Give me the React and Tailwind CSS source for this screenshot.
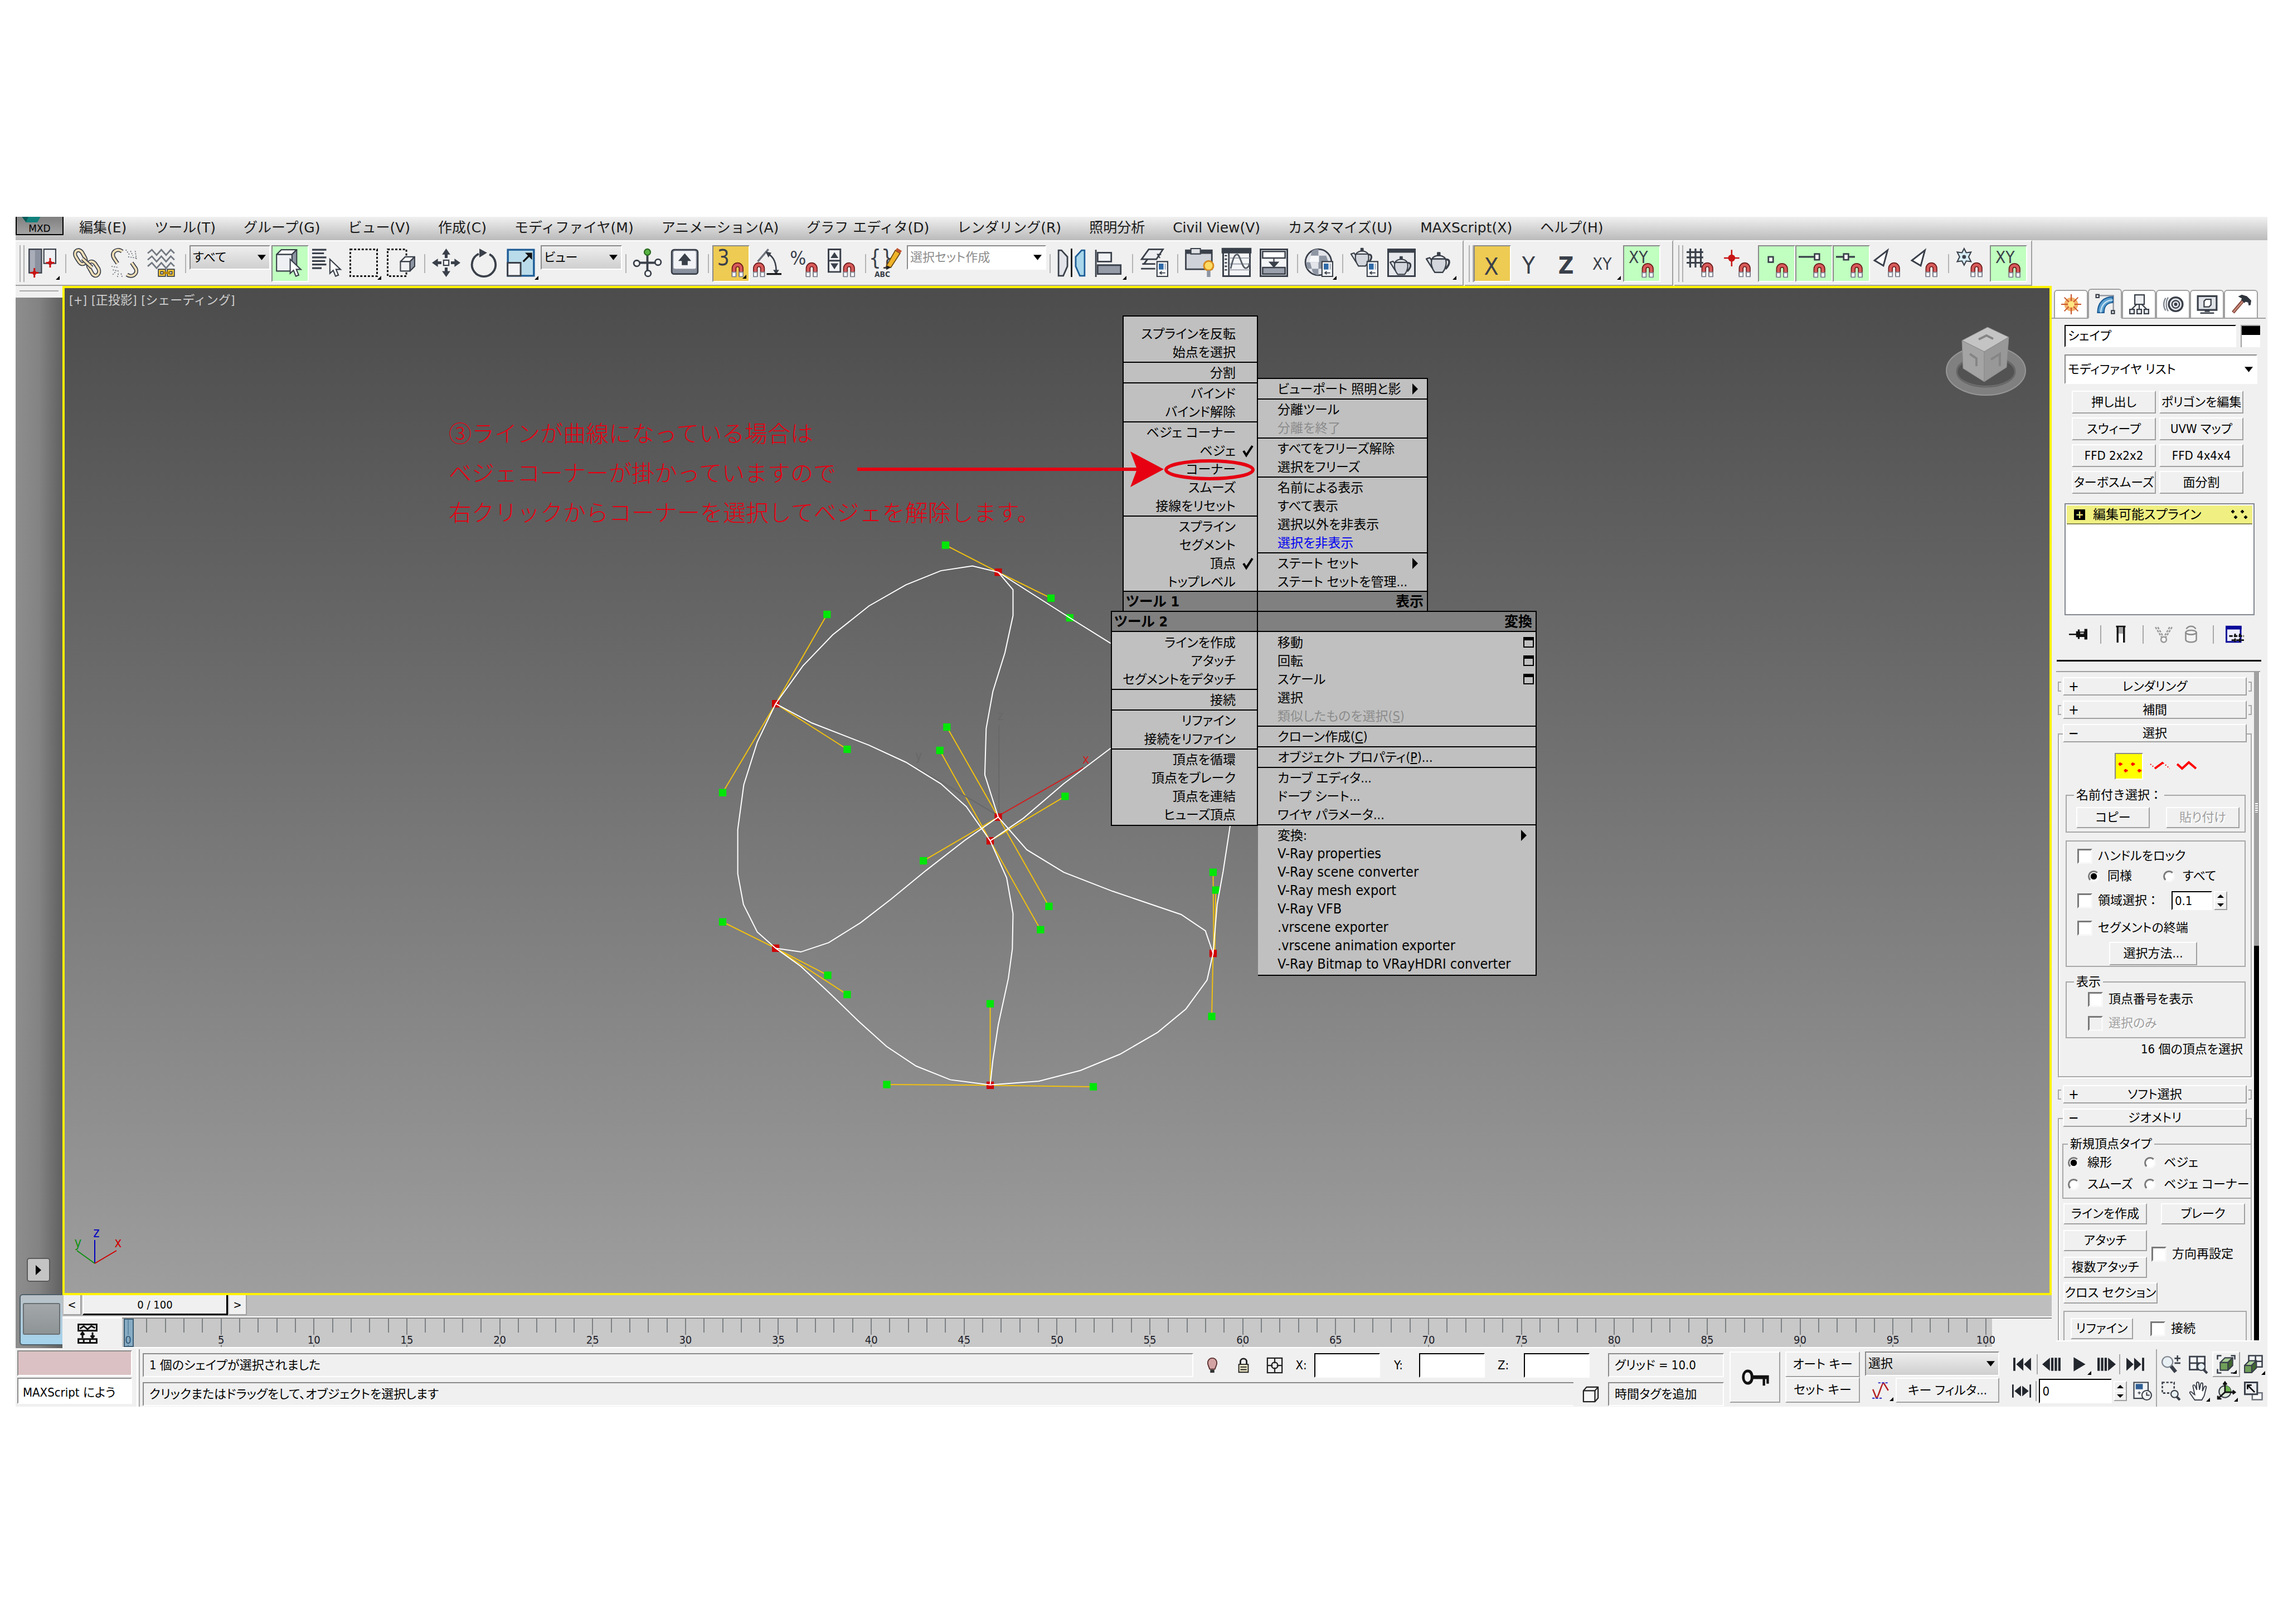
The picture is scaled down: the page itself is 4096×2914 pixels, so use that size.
import { useState } from 'react'

const INK = '#3a404a'

/* ---------- shared icon parts ---------- */

function Magnet({ x, y }) {
  return (
    <g transform={`translate(${x} ${y})`}>
      <path d="M2 12V5.2a3 3 0 0 1 6 0V12" fill="none" stroke="#6b1a1a" strokeWidth="4" />
      <path d="M2 12V5.2a3 3 0 0 1 6 0V12" fill="none" stroke="#d85a5a" strokeWidth="2.4" />
      <path d="M.4 8.4h3.2v3.8H.4zM6.4 8.4h3.2v3.8H6.4z" fill="#fff" stroke="#7c8594" strokeWidth=".8" />
    </g>
  )
}

function Rope({ d, color = '#f3dfb8', width = 3.4 }) {
  return (
    <>
      <path d={d} fill="none" stroke={INK} strokeWidth={width} />
      <path d={d} fill="none" stroke={color} strokeWidth={width - 1.6} />
    </>
  )
}

function Cursor({ x, y }) {
  return (
    <path
      transform={`translate(${x} ${y})`}
      d="M0 0v12l2.8-2.6 2 5 2.4-1-2-4.8h3.8z"
      fill="#fff"
      stroke={INK}
      strokeWidth="1"
    />
  )
}

function Cube({ x, y, w = 12, h = 12, front = '#eef0f3', side = '#8d95a3', top = '#fff' }) {
  return (
    <g transform={`translate(${x} ${y})`} stroke={INK} strokeWidth="1" strokeLinejoin="round">
      <path d={`M0 4L4 0h${w - 4}l-4 4z`} fill={top} />
      <path d={`M${w - 4} 4l4-4v${h - 4}l-4 4z`} fill={side} />
      <path d={`M0 4h${w - 4}v${h - 4}H0z`} fill={front} />
    </g>
  )
}

function Teapot({ x = 0, y = 0, s = 1 }) {
  return (
    <g transform={`translate(${x} ${y}) scale(${s})`} stroke={INK} strokeWidth="1.2" strokeLinejoin="round">
      <path d="M17 7c5-2 6 3 1 8" fill="none" strokeWidth="1.8" />
      <path d="M6 14L1 6l3-1 3 4z" fill="#dfe2e7" />
      <path d="M6 6h12c1.5 4 0 9-2.500 12h-7C6 15 4.500 10 6 6z" fill="#d3d6dc" />
      <path d="M6 6c1-2 4-3 6-3s5 1 6 3z" fill="#eceef1" />
      <path d="M11 .5h2V3h-2z" fill={INK} />
    </g>
  )
}

function Sheet({ x, y }) {
  return (
    <g transform={`translate(${x} ${y})`}>
      <path d="M.5.5h9v12.500h-9z" fill="#f7f8fa" stroke={INK} />
      <path d="M2 2.200h4v5H2z" fill="#2f6aa8" />
      <path d="M7 2.200h1v5H7z" fill="#aab0ba" />
      <path d="M2.500 10h5M4.500 8.700L3 10l1.500 1.300" fill="none" stroke={INK} strokeWidth=".8" />
    </g>
  )
}

function Label({ x, y, size, bold, children }) {
  return (
    <text x={x} y={y} fontSize={size} fontWeight={bold ? 700 : 400} fill={INK} textAnchor="middle">
      {children}
    </text>
  )
}

/* Main toolbar drawings on a 24 unit grid */
const drawings = {
  array: (
    <>
      <path d="M1 .5h10.500v20H1z" fill="#8b919e" stroke={INK} />
      <path d="M2 1.500h4v18H2z" fill="#a9aeb9" />
      <path d="M13.500.5H23.500v12H13.500z" fill="#eef0f3" stroke={INK} />
      <path d="M5.500 16.500v8M2 20.500h7M18.800 8v8M15.300 12h7" stroke="#c81414" strokeWidth="1.400" />
      <circle cx="5.500" cy="20.500" r="1.700" fill="#c81414" />
      <circle cx="18.800" cy="12" r="1.700" fill="#c81414" />
    </>
  ),
  link: (
    <>
      <Rope d="M3 8C-.5 3 4-1 7.500 3l2.800 5c2 4-2.500 7-5 3.500z" />
      <Rope d="M14 17c-3.500-4 1-8.500 4.500-4.500l3 4.500c2 4.500-2.500 8-5 4.500z" />
      <Rope d="M8 8.500l8 7.500" />
    </>
  ),
  unlink: (
    <>
      <Rope d="M10 2.500C6-1 0 3 3 8l3 4.500" />
      <Rope d="M14 22c4 3 9.500-.5 7.500-5L18 12" />
      <path d="M13 1l3 4M17 2l2 4M21 2l1 7M15 7l7 1M1 15l6 1M2 18l5 1M2 22l3-3M6 24l1-4M9 21l1 3" stroke="#6d727b" strokeWidth=".8" strokeDasharray="1 1" />
    </>
  ),
  bind: (
    <>
      {[1, 6.500, 12].map((y) => (
        <path key={y} d={`M0 ${y + 3}l3.500-3 4 4.500 4-4.500 4 4.500 4-4.500 3 3`} fill="none" stroke="#737982" strokeWidth="1.300" />
      ))}
      <Rope d="M10 18.500h4v4h-4zM17.500 18.500h4v4h-4z" color="#f5c532" width={2.800} />
      <path d="M13 20.500h6" stroke="#b8860b" strokeWidth="2" />
    </>
  ),
  select: (
    <>
      <Cube x={1.500} y={1} w={17} h={18} />
      <Cursor x={13} y={9} />
    </>
  ),
  list: (
    <>
      <path d="M0 1h12M0 4h10M0 7.500h12M0 10.500h11M0 13.500h12M0 16.500h8" stroke={INK} strokeWidth="1.500" />
      <Cursor x={15} y={9} />
    </>
  ),
  region: <path d="M.7.7h22.600v22.600H.7z" fill="none" stroke="#111" strokeWidth="1.400" strokeDasharray="1.800 1.400" />,
  window: (
    <>
      <path d="M.7.7h15.800v22.600H.7z" fill="none" stroke="#111" strokeWidth="1.400" strokeDasharray="1.800 1.400" />
      <Cube x={11.500} y={7} w={12} h={12} />
    </>
  ),
  move: (
    <g fill={INK}>
      <path d="M12 0l3.500 5h-2.300v3h-2.400V5H8.500zM12 24l3.500-5h-2.300v-3h-2.400v3H8.500zM0 12l5-3.500v2.300h3v2.400H5v2.300zM24 12l-5-3.500v2.300h-3v2.400h3v2.300z" />
      <path d="M9.800 9.800h4.400v4.400H9.800z" fill="#fff" stroke={INK} />
    </g>
  ),
  rotate: (
    <>
      <path d="M8 4.500A10 10 0 1 0 17 4.800" fill="none" stroke={INK} strokeWidth="1.800" />
      <path d="M8.500 0l6.500 3.500-6.500 4z" fill={INK} />
    </>
  ),
  scale: (
    <>
      <path d="M1 1h22v22H1z" fill="#b9dbea" stroke="#1d5c96" strokeWidth="1.600" />
      <path d="M.8 12h11v11H.8z" fill="#f2f3f5" stroke={INK} strokeWidth="1.400" />
      <path d="M14 11l5-5" stroke="#111" strokeWidth="1.500" />
      <path d="M15.500 3.500H21.500v6z" fill="#111" />
    </>
  ),
  pivot: (
    <>
      <path d="M12 4v16M4 12h16" stroke={INK} strokeWidth="1.800" />
      <circle cx="12" cy="3" r="2.600" fill="#59b344" stroke="#2c6b20" />
      <circle cx="3" cy="12.500" r="2.500" fill="#fff" stroke={INK} strokeWidth="1.300" />
      <circle cx="21" cy="11.500" r="2.500" fill="#fff" stroke={INK} strokeWidth="1.300" />
      <circle cx="12.500" cy="21" r="2.500" fill="#fff" stroke={INK} strokeWidth="1.300" />
    </>
  ),
  keyboard: (
    <>
      <rect x="1" y="1" width="22" height="20.500" rx="2" fill="#8a919e" stroke={INK} strokeWidth="1.300" />
      <rect x="2.500" y="2" width="19" height="15" rx="1.500" fill="#f2f3f6" />
      <path d="M12 4l5.500 6.500H14.500V14h-5v-3.500H6.500z" fill={INK} />
    </>
  ),
  snap3: (
    <>
      <Label x={6.500} y={14} size={18}>3</Label>
      <Magnet x={13.500} y={11.500} />
    </>
  ),
  angleSnap: (
    <>
      <path d="M4 11L13 .5" stroke="#6d727b" strokeWidth="1.600" />
      <path d="M12 4c6 3 8 9 7.500 17" fill="none" stroke={INK} strokeWidth="1.200" />
      <path d="M10.500 2.500l5 1-2.500 4zM17 18h5l-2.500 4z" fill={INK} />
      <path d="M11.500 21.500H24" stroke="#111" strokeWidth="1.500" />
      <Magnet x={0} y={11.500} />
    </>
  ),
  percentSnap: (
    <>
      <Label x={6.500} y={13.500} size={16}>%</Label>
      <Magnet x={13} y={11.500} />
    </>
  ),
  spinnerSnap: (
    <>
      <path d="M.7.7h10v19h-10zM.7 10.200h10" fill="#f2f3f5" stroke={INK} strokeWidth="1.400" />
      <path d="M5.700 3l3.300 5H2.400zM5.700 17.500l3.300-5H2.400z" fill={INK} />
      <Magnet x={13} y={11.500} />
    </>
  ),
  namedSets: (
    <>
      <Label x={7} y={14} size={18}>{'{}'}</Label>
      <path d="M11.500 14.500L19 1.500l4 2.500-7.800 12z" fill="#f0b429" stroke="#6b4a12" strokeWidth=".8" />
      <path d="M19 1.500L20.500-.5l4 2.500L23 4z" fill="#c0542e" />
      <path d="M11.500 14.500l3.700 1.500-4 2z" fill="#222" />
      <Label x={8} y={24} size={6.500} bold>ABC</Label>
    </>
  ),
  mirror: (
    <>
      <path d="M1 1.500h2.500L8.500 7v8L5 23H1z" fill="#e2e4e9" stroke={INK} strokeWidth="1.300" />
      <path d="M23 1.500h-2.500L15.500 7v8L19 23h4z" fill="#a9d6ea" stroke="#1d5c96" strokeWidth="1.300" />
      <path d="M12 0v24" stroke="#111" strokeWidth="1.300" />
    </>
  ),
  align: (
    <>
      <path d="M1 1v23" stroke={INK} strokeWidth="1.300" />
      <path d="M2.500 3.500H14v7.500H2.500z" fill="#f2f3f5" stroke={INK} strokeWidth="1.300" />
      <path d="M2.500 14H22v7.500H2.500z" fill="#959ba7" stroke={INK} strokeWidth="1.300" />
    </>
  ),
  layers: (
    <>
      <path d="M1 17h12M2 13h11M3.500 13l3-4" stroke={INK} strokeWidth="1.400" fill="none" />
      <path d="M1.500 9L7.500.7h12L14 9z" fill="#eceef1" stroke={INK} strokeWidth="1.300" />
      <path d="M18 5h-3l2 3" fill="none" stroke={INK} />
      <Sheet x={14} y={10.500} />
    </>
  ),
  ribbon: (
    <>
      <path d="M.7 1.500h22v16H.7z" fill="#cfd2d8" stroke={INK} strokeWidth="1.300" />
      <path d="M.7 1h22v3.500H.7z" fill={INK} />
      <path d="M5 0h8v4.500H5z" fill="#dfe1e5" stroke={INK} />
      <circle cx="20" cy="14.500" r="4" fill="#fddb63" stroke="#d98c1e" strokeWidth="1.400" />
      <path d="M18.500 18.500h3V24h-3z" fill="#8d95a3" />
    </>
  ),
  curves: (
    <>
      <path d="M.7.7h22.600v22.600H.7z" fill="#f4f5f7" stroke={INK} strokeWidth="1.400" />
      <path d="M0 0h24v3.500H0zM5.500 3v20" fill={INK} stroke={INK} strokeWidth="1.200" />
      <path d="M2 6h2M2 9h2M2 12h2M2 15h2M2 18h2" stroke={INK} strokeWidth="1.200" />
      <path d="M6 8h17M6 13h17M6 18h17" stroke="#a6abb5" />
      <path d="M7 17c2-8 3-12 5.500-12s4 11 7 11.500c2 .3 3-2 3.500-4" fill="none" stroke="#565c66" strokeWidth="1.300" />
    </>
  ),
  schematic: (
    <>
      <path d="M.7.7h22.600v22.600H.7z" fill="#f4f5f7" stroke={INK} strokeWidth="1.400" />
      <path d="M2.500 2.500h19v5.500h-19z" fill="#fff" stroke={INK} strokeWidth="1.200" />
      <path d="M2.500 16h19v5.500h-19z" fill="#9ba1ad" stroke={INK} strokeWidth="1.200" />
      <path d="M12 8v5M8.500 11.500h7L12 15.500z" fill={INK} stroke={INK} />
    </>
  ),
  material: (
    <>
      <circle cx="11.500" cy="11.500" r="11" fill="#e3e5ea" stroke={INK} strokeWidth="1.300" />
      <path d="M6 2c2-1.500 4-1.700 5.500-1.500V6H5zM12 6h6l2 5.500h-8zM5 6l7 0v5.500H3.500zM1 11.500h3.500L6 17H2zM11.500 11.500h7L17 17h-5.500zM6 17h5.500v5.500C8 22 6 20 6 17z" fill="#8f96a3" />
      <path d="M5 6h7v5.500H3.500z" fill="#f6f7f9" />
      <Sheet x={14} y={10.500} />
    </>
  ),
  renderSetup: (
    <>
      <Teapot x={0} y={-.5} s={.85} />
      <Sheet x={14} y={10.500} />
    </>
  ),
  renderFrame: (
    <>
      <path d="M.7.7h22.600v22.600H.7z" fill="#e6e8ec" stroke={INK} strokeWidth="1.400" />
      <path d="M0 0h24v3.500H0z" fill={INK} />
      <Teapot x={1.500} y={6.500} s={.85} />
    </>
  ),
  render: <Teapot x={.5} y={3} s={.95} />,
  axisX: <Label x={12} y={22} size={20}>X</Label>,
  axisY: <Label x={12} y={21} size={20}>Y</Label>,
  axisZ: <Label x={12} y={21} size={20} bold>Z</Label>,
  axisXY: <Label x={11} y={18} size={14}>XY</Label>,
  axisXYSnap: (
    <>
      <Label x={10} y={12} size={14}>XY</Label>
      <Magnet x={13} y={12} />
    </>
  ),
  gridSnap: (
    <>
      <path d="M3 0v16M7.500 0v16M12 0v16M0 3h14M0 7.500h14M0 12h14" stroke={INK} strokeWidth="1.500" />
      <Magnet x={12.500} y={11.500} />
    </>
  ),
  pivotSnap: (
    <>
      <path d="M6.500 1v14M0 8h13" stroke="#c81414" strokeWidth="1.200" />
      <circle cx="6.500" cy="8" r="3" fill="#c81414" />
      <Magnet x={12.500} y={11.500} />
    </>
  ),
  vertexSnap: (
    <>
      <path d="M6 7h4v4.500H6z" fill="#fff" stroke={INK} strokeWidth="1.300" />
      <Magnet x={12.500} y={12} />
    </>
  ),
  endpointSnap: (
    <>
      <path d="M0 7h14" stroke={INK} strokeWidth="1.500" />
      <path d="M13.500 4.500h4V9.500h-4z" fill="#fff" stroke={INK} strokeWidth="1.300" />
      <Magnet x={12.500} y={12} />
    </>
  ),
  midpointSnap: (
    <>
      <path d="M0 7h16" stroke={INK} strokeWidth="1.500" />
      <path d="M6.500 4.500h4V9.500h-4z" fill="#fff" stroke={INK} strokeWidth="1.300" />
      <Magnet x={12.500} y={12} />
    </>
  ),
  faceSnap: (
    <>
      <path d="M12 1.500L1 10l7.500 4.500z" fill="#fff" stroke={INK} strokeWidth="1.400" />
      <Magnet x={12.500} y={11.500} />
    </>
  ),
  frozenSnap: (
    <>
      <path d="M7 0l1.800 3.500 4-.5-2 4 2 4-4-.5L7 14l-1.800-3.500-4 .5 2-4-2-4 4 .5z" fill="#d6eef5" stroke={INK} />
      <circle cx="7" cy="7" r="1.600" fill={INK} />
      <Magnet x={12.500} y={11.500} />
    </>
  ),
}

/* Small drawings for the panels and the status bar, 16 unit grid */
const glyphs = {
  sun: (
    <>
      <circle cx="8" cy="8" r="5.500" fill="#f3b269" />
      <path d="M8 0v16M0 8h16M2.500 2.500l11 11M13.500 2.500l-11 11" stroke="#c9542b" strokeWidth=".9" />
      <circle cx="8" cy="8" r="2.600" fill="#ffe680" />
    </>
  ),
  modify: (
    <>
      <path d="M2 1.500h12.500V15" fill="none" stroke="#8c919b" />
      <path d="M2 15C2 7 7 2.500 14 2.500V7c-5 .5-7 3-7 8z" fill="#5aa0d0" stroke="#1d5c96" />
      <path d="M4.500 15c0-6 4-10 9.500-10" fill="none" stroke="#cfe6f4" />
      <path d="M.7.700h2.300v2.300H.7zM13 13.500h2.300v2.300H13z" fill="#fff" stroke={INK} />
    </>
  ),
  hierarchy: (
    <g fill="#eef0f3" stroke={INK}>
      <path d="M4.500.5h7.500V8H4.500zM.5 12h3.500v3.500H.5zM6.300 12h3.500v3.500H6.300zM12 12h3.500v3.500H12z" />
      <path d="M6 8l-4 4M8 8v4M10 8l4 4" fill="none" />
    </g>
  ),
  motion: (
    <g fill="none" stroke={INK}>
      <circle cx="10" cy="8" r="5.500" strokeWidth="1.500" fill="#e3e5ea" />
      <circle cx="10" cy="8" r="3" />
      <circle cx="10" cy="8" r=".8" fill={INK} />
      <path d="M4 2.500c-2 3-2 8 0 11M2 3c-2 3-2 7 0 10" stroke="#7d838d" />
    </g>
  ),
  display: (
    <g stroke={INK} fill="#dfe2e7">
      <path d="M.5 1.500h15v11H.5z" strokeWidth="1.400" />
      <path d="M5.500 5.500l1.500-1.500h4v4.500L9.500 10h-4z" fill="#fff" />
      <path d="M2.500 15h11M6 13.500h4" strokeWidth="1.200" />
    </g>
  ),
  hammer: (
    <>
      <path d="M1.500 14.500L10 4.500" stroke="#7c3f33" strokeWidth="2.600" />
      <path d="M1.800 14.200L10 4.700" stroke="#c98a78" strokeWidth="1.200" />
      <path d="M5.500 1.800l3-1.500 4 1.200 3.500 3.500-.5 3.500-1.500.5-.5-2.500-2-.5-1 1-2.500-2.500.5-1.200z" fill="#30353d" />
    </>
  ),
  pin: (
    <g fill="#111">
      <path d="M0 7.500h6v1.200H0zM6 5.500h1.500v5H6zM7.500 4H9v8H7.500zM9 5.800h4v4.500H9zM13 3.500h2.500v9H13z" />
      <path d="M9.500 6.500h3v1.300h-3z" fill="#bbb" />
    </g>
  ),
  showEnd: (
    <>
      <path d="M4 1.500h8" stroke="#111" strokeWidth="1.400" />
      <path d="M5.300 1v14M10.700 1v14" stroke="#111" strokeWidth="1.600" />
      <path d="M6.100 2h3.800v5.500H6.100z" fill="#a4a4a4" />
      <path d="M6.100 7.500h3.800V15H6.100z" fill="#fff" />
    </>
  ),
  unique: (
    <g fill="none" stroke="#999" strokeWidth="1.200">
      <path d="M1 2l5.500 9M15 2l-5.500 9M3 2l4 7M13 2l-4 7" strokeDasharray="2 1" />
      <circle cx="8" cy="12.500" r="2.300" fill="#f7f7f7" />
    </g>
  ),
  trash: (
    <g fill="#f4f4f4" stroke="#8e8e8e" strokeWidth="1.200">
      <path d="M3.500 6.500v6c0 3 9 3 9 0v-6" />
      <ellipse cx="8" cy="6.500" rx="4.500" ry="1.800" />
      <path d="M4 3.500c2-3 6-3 8 0" fill="none" />
    </g>
  ),
  configure: (
    <>
      <path d="M.7 1.500h12v13H.7z" fill="#eef" stroke="#0a0a9a" strokeWidth="1.400" />
      <path d="M0 1h13.500v3H0z" fill="#0a0a9a" />
      <path d="M3 9.500h12.500M5 13h10.500M8 7.500V15M12 7.500V15" stroke="#111" strokeWidth="1.400" strokeDasharray="3 1" />
    </>
  ),
  key: (
    <path d="M4 4a3 4 0 0 0 0 8c2 0 2.800-1.500 3-3h5v3.500h1.300V9H14v2.500h1.300V7H7c-.2-1.500-1-3-3-3zm0 1.500c1 0 1.600 1 1.600 2.500S5 10.500 4 10.500 2.400 9.500 2.400 8 3 5.500 4 5.500z" fill="#111" fillRule="evenodd" />
  ),
  tangent: (
    <>
      <path d="M1.500 7l3 7.500c1.500 0 4.500-13 6-13L14.500 8" fill="none" stroke="#b52020" strokeWidth="1.200" />
      <path d="M1 14.500h8M6 1.500h9" stroke="#3a3ac8" strokeWidth="1" strokeDasharray="2 1" />
    </>
  ),
  first: <path d="M.5 2.500h1.800v11H.5zM9 2.500v11L3 8zM15.500 2.500v11l-6-5.500z" fill="#22262d" />,
  prev: <path d="M6.500 2.500v11L0 8zM7.500 2.500h2v11h-2zM10.500 2.500h2v11h-2zM13.500 2.500h2v11h-2z" fill="#22262d" />,
  play: <path d="M3 2l10 6-10 6z" fill="#22262d" />,
  next: <path d="M9.500 2.500v11L16 8zM.5 2.500h2v11h-2zM3.500 2.500h2v11h-2zM6.500 2.500h2v11h-2z" fill="#22262d" />,
  last: <path d="M.5 2.500v11l6-5.500zM7 2.500v11L13 8zM13.700 2.500h1.800v11h-1.800z" fill="#22262d" />,
  keyMode: <path d="M0 2.500h1.300v11H0zM14.700 2.500H16v11h-1.300zM7.500 3.500v9L2 8zM8.500 3.500v9L14 8z" fill="#22262d" />,
  timeConfig: (
    <>
      <path d="M.7.700h12v13.500H.7z" fill="#f4f5f7" stroke={INK} />
      <path d="M2.200 2h6v4.500h-6z" fill="#2f5f95" />
      <path d="M4 9.500h2.500M5.200 8.300v2.500" stroke={INK} strokeWidth=".7" />
      <circle cx="11.500" cy="11.500" r="4" fill="#f4f5f7" stroke={INK} />
      <path d="M11.500 9v2.500h2.500" fill="none" stroke={INK} />
    </>
  ),
  zoom: (
    <>
      <path d="M8 9.500l4 5" stroke={INK} strokeWidth="3" />
      <circle cx="5" cy="6" r="4.500" fill="#e8f0f4" stroke="#7d838d" />
      <path d="M13.500.5v5M11 3h5M11 7h5" stroke={INK} strokeWidth="1.200" />
    </>
  ),
  zoomAll: (
    <>
      <path d="M.7 1.500H13.500v11H.7zM.7 7h12.800M7 1.500v11" fill="#f4f5f7" stroke={INK} strokeWidth="1.300" />
      <path d="M12 12l3.500 3.500" stroke={INK} strokeWidth="2" />
      <circle cx="10.500" cy="10" r="3.200" fill="#e8f0f4" stroke={INK} />
    </>
  ),
  extents: (
    <>
      <path d="M.7 4V.7H4M12 .7h3.300V4M.7 12v3.300H4M12 15.300h3.300" fill="none" stroke={INK} strokeWidth="1.200" />
      <Cube x={3} y={2.500} w={10.500} h={10.500} front="#6f9f58" side="#41682f" top="#a9cf97" />
    </>
  ),
  extentsAll: (
    <>
      <path d="M4 .7h11.300v9.500H4zM4 5.500h11.300M9.700.7v9.500" fill="#f4f5f7" stroke={INK} strokeWidth="1.200" />
      <Cube x={.5} y={5} w={10} h={10} front="#6f9f58" side="#41682f" top="#a9cf97" />
    </>
  ),
  zoomRegion: (
    <>
      <path d="M.7.700h10v9h-10z" fill="none" stroke={INK} strokeWidth="1.200" strokeDasharray="2 1.300" />
      <path d="M12.500 12.500l3 3" stroke={INK} strokeWidth="2" />
      <circle cx="11" cy="10.500" r="3" fill="#e8f0f4" stroke={INK} />
    </>
  ),
  pan: (
    <path d="M5 15.500L.8 9.500c0-1.500 1.700-1 2.700.5L5 11 3.500 4c0-1.500 1.500-1.500 2 0L6.700 7 6.500 1.500c.2-1.500 1.800-1.300 2 0L9 7l1-5c.5-1.300 2-1 1.800.4L11.500 8l1.500-3.500c.7-1.200 2-.6 1.700.6L13 12l-2 3.500z" fill="#fff" stroke={INK} strokeWidth=".9" />
  ),
  orbit: (
    <>
      <circle cx="7" cy="8.500" r="5" fill="#dfeadb" stroke={INK} />
      <path d="M7 3.500c4 0 5 3 5 5H7z" fill="#6db24f" />
      <path d="M7 0v9M7 9h8.500M7 9l-6 5.500M5.500 2.500L7 .5l1.500 2M13.500 7.500L15.500 9l-2 1.500M1 12v2.500h3" fill="none" stroke="#111" strokeWidth="1.300" />
    </>
  ),
  maximize: (
    <>
      <path d="M7 9.500h8.300v5.800H7z" fill="#fff" stroke="#6d727b" strokeWidth="1.200" />
      <path d="M.7.700h10.500v10H.7z" fill="#eceef1" stroke={INK} strokeWidth="1.400" />
      <path d="M9 9L3.500 3.500M3 6.500V3h3.500" fill="none" stroke="#111" strokeWidth="1.300" />
    </>
  ),
  bulb: (
    <>
      <path d="M5.500 11.500L4 7.500C2.800 4 5 1 8 1s5.200 3 4 6.500l-1.500 4z" fill="#d3a3a3" stroke="#5c2f2f" />
      <path d="M6 12h4v3H6z" fill="#333" />
    </>
  ),
  lock: (
    <>
      <path d="M5 7V4.500c0-4 6-4 6 0V7" fill="none" stroke="#222" strokeWidth="1.500" />
      <path d="M3.500 7h9v7.500h-9z" fill="#e9e4c2" stroke="#222" />
      <path d="M5 9.500h6M5 12h6" stroke="#222" />
    </>
  ),
  absolute: (
    <g fill="none" stroke="#222" strokeWidth="1.200">
      <path d="M1 1h14v14H1z" />
      <circle cx="8" cy="8" r="3" />
      <path d="M8 1v5M8 10v5M1 8h5M10 8h5" />
    </g>
  ),
  box: (
    <g fill="#f7f7f7" stroke="#222" strokeWidth="1.200" strokeLinejoin="round">
      <path d="M1 4.500L4 1h11v10.500L12 15H1z" />
      <path d="M1 4.500h11V15M12 4.500L15 1" fill="none" />
    </g>
  ),
  miniCurve: (
    <g fill="none" stroke="#111" strokeWidth="1.300">
      <path d="M.7.700h14.600v5H.7zM2 4l3-2 3 2.500 3-2.500 3 1.500M.7 12.300h14.600v3H.7zM5 12.300v3M10 12.300v3" />
      <path d="M4 11.500v-4M2.500 9L4 7l1.500 2M12 7v4M10.500 9.500L12 11.500l1.500-2" />
    </g>
  ),
}

function Glyph({ name, className = 'size-[34px]' }) {
  return (
    <svg viewBox="0 0 16 16" className={`${className} shrink-0 overflow-visible`} aria-hidden="true">
      {glyphs[name]}
    </svg>
  )
}

const flyoutMark = (
  <svg viewBox="0 0 4 4" className="absolute right-1 bottom-1 size-[7px]" aria-hidden="true">
    <path d="M4 0v4H0z" fill="#000" />
  </svg>
)

const raised = 'border-2 border-t-white border-l-white border-r-[#a0a0a0] border-b-[#a0a0a0]'
const sunken = 'border-2 border-t-[#8a8a8a] border-l-[#8a8a8a] border-r-white border-b-white'

/* ---------- menu bar and toolbar ---------- */

const menus = [
  '編集(E)', 'ツール(T)', 'グループ(G)', 'ビュー(V)', '作成(C)', 'モディファイヤ(M)', 'アニメーション(A)',
  'グラフ エディタ(D)', 'レンダリング(R)', '照明分析', 'Civil View(V)', 'カスタマイズ(U)', 'MAXScript(X)', 'ヘルプ(H)',
]

function MenuBar() {
  return (
    <nav className="flex h-[42px] shrink-0 items-start bg-linear-to-b from-[#f1f1f1] to-[#bababa] font-['DejaVu_Sans','Noto_Sans_CJK_JP',sans-serif] text-[25px] [font-feature-settings:normal]">
      <button className="flex h-[33px] w-[86px] flex-col items-center justify-between border-2 border-t-0 border-black bg-linear-to-b from-[#808080] to-[#a3a3a3] text-[17px] leading-5">
        <svg viewBox="0 0 36 12" className="ml-2 h-3 w-9 self-start" aria-hidden="true">
          <path d="M0 0h36l-6 11H8z" fill="#12817c" />
          <path d="M0 0h12L8 11z" fill="#0b5a58" />
        </svg>
        MXD
      </button>
      <div className="ml-7 flex gap-[50px]">
        {menus.map((menu) => (
          <button key={menu} className="leading-10 whitespace-nowrap text-[#1a1a1a]">{menu}</button>
        ))}
      </div>
    </nav>
  )
}

function Tool({ icon, on, flyout }) {
  const look = on === 'green' ? `bg-[#c0ffc0] ${sunken}` : on === 'gold' ? `bg-[#eecb52] ${sunken}` : ''
  return (
    <button title={icon} className={`relative flex h-[66px] w-[67px] shrink-0 items-center justify-center pr-1 pb-1 ${look}`}>
      <svg viewBox="0 0 24 24" className="size-[51px] shrink-0 overflow-visible" aria-hidden="true">
        {drawings[icon]}
      </svg>
      {flyout && flyoutMark}
    </button>
  )
}

const Gap = () => <span className="mx-[6px] mt-4 h-[34px] w-[2px] shrink-0 bg-[#b4b4b4]" />

const Arrow = ({ className = 'right-2' }) => (
  <svg viewBox="0 0 14 9" className={`pointer-events-none absolute top-1/2 h-[10px] w-[15px] -translate-y-1/2 ${className}`} aria-hidden="true">
    <path d="M0 0h14L7 9z" fill="#000" />
  </svg>
)

function Drop({ label, value, className, tone = 'bg-linear-to-b from-[#eeeeee] to-[#cfcfcf]' }) {
  return (
    <div className={`relative shrink-0 ${className}`}>
      <select aria-label={label} className={`size-full appearance-none pr-8 pl-1 leading-7 ${tone} ${sunken}`}>
        <option>{value}</option>
      </select>
      <Arrow />
    </div>
  )
}

function Strip({ children }) {
  return (
    <section className="flex h-[82px] shrink-0 items-start border-t-2 border-r-2 border-b-2 border-t-white border-r-[#a0a0a0] border-b-[#a0a0a0] pt-[7px] pr-[7px]">
      <span className="ml-[7px] h-[66px] w-[9px] shrink-0 border-x-2 border-[#b0b0b0]" />
      {children}
    </section>
  )
}

function Toolbar() {
  return (
    <div className="flex shrink-0 gap-[2px]">
      <Strip>
        <Tool icon="array" flyout />
        <Gap />
        <Tool icon="link" />
        <Tool icon="unlink" />
        <Tool icon="bind" />
        <Gap />
        <Drop label="選択フィルタ" value="すべて" className="mr-[2px] h-[44px] w-[145px]" />
        <Tool icon="select" on="green" />
        <Tool icon="list" />
        <Tool icon="region" flyout />
        <Tool icon="window" />
        <Gap />
        <Tool icon="move" />
        <Tool icon="rotate" />
        <Tool icon="scale" flyout />
        <Drop label="参照座標系" value="ビュー" className="h-[44px] w-[146px]" />
        <Gap />
        <Tool icon="pivot" />
        <Tool icon="keyboard" />
        <Gap />
        <Tool icon="snap3" on="gold" flyout />
        <Tool icon="angleSnap" />
        <Tool icon="percentSnap" />
        <Tool icon="spinnerSnap" />
        <Gap />
        <Tool icon="namedSets" />
        <Drop label="名前付き選択セット" value="選択セット作成" className="h-[44px] w-[250px] text-[#8c8c8c]" tone="bg-white" />
        <Gap />
        <Tool icon="mirror" />
        <Tool icon="align" flyout />
        <Gap />
        <Tool icon="layers" />
        <Gap />
        <Tool icon="ribbon" />
        <Tool icon="curves" />
        <Tool icon="schematic" />
        <Gap />
        <Tool icon="material" flyout />
        <Gap />
        <Tool icon="renderSetup" />
        <Tool icon="renderFrame" />
        <Tool icon="render" flyout />
      </Strip>
      <Strip>
        <Tool icon="axisX" on="gold" />
        <Tool icon="axisY" />
        <Tool icon="axisZ" />
        <Tool icon="axisXY" flyout />
        <Tool icon="axisXYSnap" on="green" />
        <span className="w-[14px]" />
      </Strip>
      <Strip>
        <Tool icon="gridSnap" />
        <Tool icon="pivotSnap" />
        <Tool icon="vertexSnap" on="green" />
        <Tool icon="endpointSnap" on="green" />
        <Tool icon="midpointSnap" on="green" />
        <Tool icon="faceSnap" />
        <Tool icon="faceSnap" />
        <Gap />
        <Tool icon="frozenSnap" />
        <Tool icon="axisXYSnap" on="green" />
      </Strip>
    </div>
  )
}

/* ---------- viewport ---------- */

const splines = [
  '865,123 788,106 694,119 590,157 480,214 372,292 283,376 202,478 147,582 107,697 89,818 89,937 106,1020 147,1094 202,1138 277,1187 360,1257 450,1336 532,1403 620,1456 722,1493 841,1507 986,1497 1110,1468 1228,1424 1340,1365 1424,1302 1487,1224 1505,1152 1517,1020 1535,930 1557,800',
  '865,123 909,170 909,240 885,340 849,445 829,545 825,670 865,784 950,872 1060,933 1205,984 1410,1047 1482,1091 1505,1152',
  '202,478 310,530 480,590 590,636 694,694 770,756 841,848 890,948 909,1045 907,1140 895,1220 865,1345 849,1440 841,1507',
  '202,1138 277,1148 360,1123 455,1069 545,1006 650,928 765,847 865,784',
  '841,848 940,787 1060,694 1200,598',
  '865,123 1078,246 1200,315',
]

const tangents = [
  [708, 50, 865, 123], [865, 123, 1022, 193], [355, 237, 202, 478], [202, 478, 44, 718], [202, 478, 415, 601],
  [712, 541, 865, 784], [865, 784, 1016, 1025], [691, 604, 841, 848], [841, 848, 991, 1088], [1064, 728, 841, 848],
  [642, 902, 865, 784], [44, 1067, 202, 1138], [202, 1138, 357, 1211], [202, 1138, 415, 1263], [841, 1288, 841, 1507],
  [533, 1506, 841, 1508], [841, 1508, 1148, 1512], [1505, 933, 1507, 1152], [1513, 981, 1510, 1152], [1505, 1152, 1501, 1322],
]

const handles = [
  [708, 50], [1022, 193], [1078, 246], [355, 237], [44, 718], [415, 601], [712, 541], [691, 604], [1064, 728], [642, 902],
  [1016, 1025], [991, 1088], [44, 1067], [357, 1211], [415, 1263], [841, 1288], [533, 1506], [1148, 1512], [1505, 933],
  [1513, 981], [1501, 1322],
]

const knots = [[865, 123], [202, 478], [865, 784], [841, 848], [202, 1138], [841, 1508], [1505, 1152]]

function Scene() {
  return (
    <svg className="absolute inset-0 size-full" aria-hidden="true">
      <g transform="translate(1154 428) scale(.6023 .6647)">
        <g stroke="#f0c010" strokeWidth="2">
          {tangents.map(([x1, y1, x2, y2], i) => (
            <line key={i} x1={x1} y1={y1} x2={x2} y2={y2} vectorEffect="non-scaling-stroke" />
          ))}
        </g>
        <path d="M867 782V535M865 780L625 652" stroke="#686868" strokeWidth="2" vectorEffect="non-scaling-stroke" />
        <path d="M867 780L1118 650" stroke="#d02020" strokeWidth="2" vectorEffect="non-scaling-stroke" />
        {handles.map(([x, y], i) => (
          <rect key={i} x={x - 11} y={y - 10} width="22" height="20" fill="#00e608" />
        ))}
        {knots.map(([x, y], i) => (
          <rect key={i} x={x - 11} y={y - 10} width="22" height="20" fill="#d00000" />
        ))}
        <g fill="none" stroke="#fff" strokeWidth="2">
          {splines.map((points) => (
            <polyline key={points} points={points} vectorEffect="non-scaling-stroke" />
          ))}
        </g>
      </g>
      <g fontSize="23" textAnchor="middle" fill="#686868">
        <text x="1679" y="775">z</text>
        <text x="1532" y="847">y</text>
        <text x="1832" y="853" fill="#d02020">x</text>
      </g>

      {/* world axis tripod */}
      <g strokeWidth="2" fontSize="24" textAnchor="middle">
        <path d="M54 1750V1708" stroke="#0000c0" />
        <path d="M54 1750L22 1727" stroke="#109010" />
        <path d="M54 1750L93 1727" stroke="#d00000" />
        <text x="57" y="1703" fill="#0000c0">z</text>
        <text x="24" y="1721" fill="#109010">y</text>
        <text x="96" y="1721" fill="#d00000">x</text>
      </g>
    </svg>
  )
}

function ViewCube() {
  return (
    <svg viewBox="0 0 150 140" className="absolute top-[58px] right-[39px] h-[140px] w-[150px]" aria-hidden="true">
      <ellipse cx="75" cy="90" rx="62" ry="36" fill="none" stroke="#808080" strokeWidth="18" />
      <ellipse cx="75" cy="90" rx="71" ry="44" fill="none" stroke="#969696" strokeWidth="2" />
      <ellipse cx="75" cy="92" rx="52" ry="27" fill="none" stroke="#686868" strokeWidth="3" />
      <g stroke="#8a8a8a" strokeLinejoin="round">
        <path d="M32 36l46-24 38 18-44 26z" fill="#c4c4c4" />
        <path d="M32 36l40 20v54L34 86z" fill="#a4a4a4" />
        <path d="M72 56l44-26-4 54-40 26z" fill="#989898" />
      </g>
      <path d="M62 34l14-7 12 6M46 60l12 8v14M84 70l16-10v22" fill="none" stroke="#858585" strokeWidth="4" />
    </svg>
  )
}

const quadTool1 = [
  ['スプラインを反転', '始点を選択'],
  ['分割'],
  ['バインド', 'バインド解除'],
  ['ベジェ コーナー', { text: 'ベジェ', check: true }, 'コーナー', 'スムーズ', '接線をリセット'],
  ['スプライン', 'セグメント', { text: '頂点', check: true }, 'トップレベル'],
]

const quadDisplay = [
  [{ text: 'ビューポート 照明と影', more: true }],
  ['分離ツール', { text: '分離を終了', off: true }],
  ['すべてをフリーズ解除', '選択をフリーズ'],
  ['名前による表示', 'すべて表示', '選択以外を非表示', { text: '選択を非表示', hot: true }],
  [{ text: 'ステート セット', more: true }, 'ステート セットを管理...'],
]

const quadTool2 = [
  ['ラインを作成', 'アタッチ', 'セグメントをデタッチ'],
  ['接続'],
  ['リファイン', '接続をリファイン'],
  ['頂点を循環', '頂点をブレーク', '頂点を連結', 'ヒューズ頂点'],
]

const quadTransform = [
  [
    { text: '移動', settings: true },
    { text: '回転', settings: true },
    { text: 'スケール', settings: true },
    '選択',
    { text: '類似したものを選択', hotkey: 'S', off: true },
  ],
  [{ text: 'クローン作成', hotkey: 'C' }],
  [{ text: 'オブジェクト プロパティ', hotkey: 'P', tail: '...' }],
  ['カーブ エディタ...', 'ドープ シート...', 'ワイヤ パラメータ...'],
  [
    { text: '変換:', more: true },
    { text: 'V-Ray properties', latin: true },
    { text: 'V-Ray scene converter', latin: true },
    { text: 'V-Ray mesh export', latin: true },
    { text: 'V-Ray VFB', latin: true },
    { text: '.vrscene exporter', latin: true },
    { text: '.vrscene animation exporter', latin: true },
    { text: 'V-Ray Bitmap to VRayHDRI converter', latin: true },
  ],
]

function QuadItem({ item, left }) {
  const it = typeof item === 'string' ? { text: item } : item
  const color = it.off ? 'text-[#8c8c8c]' : it.hot ? 'text-[#0000f0]' : 'text-black'
  return (
    <button
      disabled={it.off}
      className={`relative flex h-[33px] items-center whitespace-nowrap hover:bg-[#d8d8d8] ${color} ${left ? 'justify-end pr-[38px]' : 'pl-[35px]'} ${it.latin ? 'text-[25px]' : 'text-[23px]'}`}
    >
      {it.text}
      {it.hotkey && <span>(<u>{it.hotkey}</u>)</span>}
      {it.tail}
      {it.check && (
        <svg viewBox="0 0 20 24" className="absolute right-[6px] h-6 w-5" aria-hidden="true">
          <path d="M2 12l5 8L18 3" fill="none" stroke="#000" strokeWidth="4" />
        </svg>
      )}
      {it.more && (
        <svg viewBox="0 0 10 20" className="absolute right-[16px] h-5 w-[10px]" aria-hidden="true">
          <path d="M0 0l10 10L0 20z" fill="#000" />
        </svg>
      )}
      {it.settings && <span className="absolute right-[3px] h-[19px] w-[19px] border-2 border-t-[6px] border-black" />}
    </button>
  )
}

function QuadPanel({ groups, left, className = '' }) {
  return (
    <div className={`flex flex-col bg-[#c0c0c0] ${className}`}>
      {groups.map((group, i) => (
        <div key={i} className="flex flex-col">
          {i > 0 && <hr className="my-px border-t-2 border-black" />}
          {group.map((item) => (
            <QuadItem key={item.text || item} item={item} left={left} />
          ))}
        </div>
      ))}
    </div>
  )
}

function QuadTitle({ children, right }) {
  return (
    <div className={`h-[36px] border-t-2 border-black bg-[#808080] px-1 text-[25px] leading-[36px] font-bold ${right ? 'pr-[6px] text-right' : ''}`}>
      {children}
    </div>
  )
}

/* four menus that meet at one corner */
function QuadMenu() {
  return (
    <div className="absolute top-[49px] left-[1877px] flex flex-col">
      <div className="flex items-end">
        <div className="ml-[21px] w-[243px] border-2 border-b-0 border-black">
          <QuadPanel groups={quadTool1} left className="pt-[14px]" />
          <QuadTitle>ツール 1</QuadTitle>
        </div>
        <div className="w-[305px] border-t-2 border-r-2 border-black">
          <QuadPanel groups={quadDisplay} className="pt-px" />
          <QuadTitle right>表示</QuadTitle>
        </div>
      </div>
      <div className="flex items-start">
        <div className="w-[264px] border-2 border-t-0 border-black">
          <QuadTitle>ツール 2</QuadTitle>
          <QuadPanel groups={quadTool2} left className="border-t-2 border-black pt-[2px] pb-[2px]" />
        </div>
        <div className="w-[500px] border-r-2 border-b-2 border-black">
          <QuadTitle right>変換</QuadTitle>
          <QuadPanel groups={quadTransform} className="border-t-2 border-black pt-[2px] pb-[3px]" />
        </div>
      </div>
    </div>
  )
}

function Annotation() {
  return (
    <>
      <p className="absolute top-[223px] left-[689px] font-['Noto_Sans_CJK_JP',sans-serif] text-[41px] leading-[71px] font-light whitespace-nowrap text-[#e60012] [font-feature-settings:normal]">
        ③ラインが曲線になっている場合は
        <br />
        ベジェコーナーが掛かっていますので
        <br />
        右クリックからコーナーを選択してベジェを解除します。
      </p>
      <svg viewBox="0 0 720 90" className="absolute top-[280px] left-[1422px] h-[90px] w-[720px]" aria-hidden="true">
        <path d="M0 45h506" stroke="#e60012" strokeWidth="6" />
        <path d="M490 13l60 32-60 32 12-32z" fill="#e60012" />
        <ellipse cx="632" cy="46" rx="78" ry="16" fill="none" stroke="#e60012" strokeWidth="6" />
      </svg>
    </>
  )
}

function Viewport() {
  return (
    <main className="relative min-h-0 flex-1 overflow-hidden border-4 border-[#fff200] bg-linear-to-b from-[#4c4c4c] to-[#9e9e9e]">
      <div className="flex gap-2 pt-1 pl-2 text-[22px] leading-9 text-[#cfcfcf] [font-feature-settings:normal]">
        <button>[+]</button>
        <button>[正投影]</button>
        <button>[シェーディング]</button>
      </div>
      <Scene />
      <ViewCube />
      <QuadMenu />
      <Annotation />
    </main>
  )
}

/* ---------- time slider and track bar ---------- */

const frames = Array.from({ length: 101 }, (_, i) => i)

function TimeSlider() {
  return (
    <div className="flex h-[38px] shrink-0 gap-[2px] bg-[#bebebe] pl-[2px] text-[20px]">
      <button className="h-9 w-8 border-r-2 border-b-2 border-[#a0a0a0] bg-[#f0f0f0]">&lt;</button>
      <button className="h-9 w-[261px] border-r-[3px] border-b-[3px] border-l-2 border-black border-l-white bg-[#f0f0f0]">0 / 100</button>
      <button className="h-9 w-8 border-r-2 border-b-2 border-[#a0a0a0] bg-[#f0f0f0]">&gt;</button>
    </div>
  )
}

function TrackBar() {
  return (
    <div className="flex h-[57px] shrink-0 border-t-2 border-white">
      <button title="ミニカーブ エディタ" className="flex w-[107px] shrink-0 items-center border-t-2 border-white pl-[27px]">
        <Glyph name="miniCurve" className="size-[36px]" />
      </button>
      <div className="relative flex flex-1 justify-between border-t-2 border-b-2 border-t-[#8a8a8a] border-b-white bg-[#c8c8c8] pr-[10px] pl-[10px]">
        {frames.map((f) => (
          <div key={f} className="flex w-[2px] flex-col items-center text-[20px] leading-[18px] text-[#1c1c28]">
            <span className={f % 5 ? 'h-[25px] w-[2px] bg-[#7d8184]' : 'h-[29px] w-[2px] bg-[#7d8184]'} />
            {f % 5 === 0 && <span className="h-[18px]">{f}</span>}
            {f % 5 === 0 && <span className="w-[2px] flex-1 bg-[#7d8184]" />}
          </div>
        ))}
        <span className="absolute inset-y-0 left-[3px] w-[18px] border-2 border-[#3d5e76] bg-[#4890bf]/50" />
      </div>
      <div className="w-[107px] shrink-0 border-t-2 border-[#8a8a8a]" />
    </div>
  )
}

/* ---------- command panel ---------- */

function PanelButton({ children, className = '', disabled }) {
  return (
    <button
      disabled={disabled}
      className={`flex h-[38px] items-center justify-center whitespace-nowrap ${raised} ${disabled ? 'text-[#a0a0a0] [text-shadow:2px_2px_0_#fff]' : ''} ${className}`}
    >
      {children}
    </button>
  )
}

function Check({ label, disabled, className = '' }) {
  return (
    <label className={`flex items-center gap-[10px] whitespace-nowrap ${disabled ? 'text-[#a0a0a0] [text-shadow:2px_2px_0_#fff]' : ''} ${className}`}>
      <input
        type="checkbox"
        disabled={disabled}
        className="size-[27px] shrink-0 appearance-none border-[3px] border-t-[#7a7a7a] border-r-[#f8f8f8] border-b-[#f8f8f8] border-l-[#7a7a7a] bg-white checked:bg-black disabled:bg-[#f0f0f0]"
      />
      {label}
    </label>
  )
}

function Radio({ label, name, on, className = '' }) {
  return (
    <label className={`flex items-center gap-[14px] whitespace-nowrap ${className}`}>
      <input
        type="radio"
        name={name}
        defaultChecked={on}
        className="size-[21px] shrink-0 appearance-none rounded-full border-[3px] border-t-[#7a7a7a] border-r-[#f8f8f8] border-b-[#f8f8f8] border-l-[#7a7a7a] bg-white checked:bg-[radial-gradient(circle,#000_50%,#fff_58%)]"
      />
      {label}
    </label>
  )
}

function Spinner({ className = '' }) {
  return (
    <div className={`flex w-[24px] shrink-0 flex-col ${raised} ${className}`}>
      <button aria-label="増やす" className="flex flex-1 items-center justify-center border-b-2 border-white">
        <svg viewBox="0 0 12 6" className="h-[6px] w-3"><path d="M6 0l6 6H0z" /></svg>
      </button>
      <button aria-label="減らす" className="flex flex-1 items-center justify-center">
        <svg viewBox="0 0 12 6" className="h-[6px] w-3"><path d="M6 6l6-6H0z" /></svg>
      </button>
    </div>
  )
}

function Rollout({ title, children, onToggle }) {
  const bar = (
    <button onClick={onToggle} className={`relative flex h-[33px] flex-1 items-center justify-center bg-[#f0f0f0] ${raised}`}>
      <span className="absolute left-2 text-[25px] leading-7">{children ? '−' : '+'}</span>
      {title}
    </button>
  )
  if (!children) {
    return (
      <section className="flex items-center gap-[3px] pr-1 pl-[3px]">
        <span className="h-[18px] w-[6px] border-2 border-r-0 border-[#a8a8a8]" />
        {bar}
        <span className="h-[18px] w-[6px] border-2 border-l-0 border-[#a8a8a8]" />
      </section>
    )
  }
  return (
    <section className="pr-1 pl-[3px]">
      <div className="relative z-10 flex px-[9px]">{bar}</div>
      <div className="-mt-4 border-2 border-[#a8a8a8] pt-4 shadow-[inset_2px_0_0_#fff,2px_2px_0_#fff]">{children}</div>
    </section>
  )
}

const tabs = ['sun', 'modify', 'hierarchy', 'motion', 'display', 'hammer']
const modifierSets = ['押し出し', 'ポリゴンを編集', 'スウィープ', 'UVW マップ', 'FFD 2x2x2', 'FFD 4x4x4', 'ターボスムーズ', '面分割']

function CommandPanel() {
  const [tab, setTab] = useState('modify')
  const [closed, setClosed] = useState({})
  const toggle = (key) => () => setClosed({ ...closed, [key]: !closed[key] })
  const line = 'h-[33px] w-[3px] border-l-2 border-[#a8a8a8]'

  return (
    <aside className="flex w-[387px] shrink-0 flex-col pb-3">
      <div className="mr-[3px] flex h-[59px] items-end">
        <span className="h-px w-1 border-b-2 border-[#a0a0a0]" />
        {tabs.map((t) => (
          <button
            key={t}
            title={t}
            onClick={() => setTab(t)}
            className={`flex w-[61px] items-center justify-center rounded-t-[6px] border-2 border-[#a0a0a0] ${t === tab ? 'h-[54px] border-b-[#f0f0f0]' : 'h-[52px] bg-white'}`}
          >
            <Glyph name={t} className="size-[36px]" />
          </button>
        ))}
        <span className="h-px flex-1 border-b-2 border-[#a0a0a0]" />
      </div>

      <div className="mt-[11px] ml-[23px] flex h-10 gap-2">
        <input aria-label="名前" defaultValue="シェイプ" className={`w-[308px] bg-white px-1 leading-8 ${sunken} border-t-black border-l-black`} />
        <button aria-label="オブジェクト カラー" className="flex w-[35px] flex-col border-t-2 border-l-2 border-[#a0a0a0] bg-white">
          <span className="h-4 w-full bg-black" />
        </button>
      </div>
      <Drop label="モディファイヤ リスト" value="モディファイヤ リスト" tone="bg-white" className="mt-[13px] ml-[23px] h-[53px] w-[346px]" />

      <div className="mt-3 ml-9 grid w-[308px] grid-cols-2 gap-x-[6px] gap-y-[7px]">
        {modifierSets.map((m) => (
          <PanelButton key={m} className="h-[41px]">{m}</PanelButton>
        ))}
      </div>

      <div className="mt-[17px] ml-[23px] h-[201px] w-[341px] shrink-0 border-2 border-[#828790] bg-white p-[2px]">
        <div className="flex h-[34px] items-center border-b-2 border-[#8a8a5a] bg-[#f0f082] pr-2 pl-[13px] text-[23px]">
          <span className="mr-[14px] flex h-[19px] w-5 items-center justify-center bg-black text-[20px] leading-4 font-bold text-[#f0f082]">+</span>
          編集可能スプライン
          <svg viewBox="0 0 30 18" className="ml-auto h-[18px] w-[30px]" aria-hidden="true">
            <path d="M0 4h6M3 1v6M17 4h6M20 1v6M5 14h6M8 11v6M23 14h6M26 11v6" stroke="#000" strokeWidth="2.500" />
          </svg>
        </div>
      </div>

      <div className="mt-[17px] flex h-[34px] shrink-0 items-center">
        <button title="スタックを固定" className="ml-[31px]"><Glyph name="pin" /></button>
        <span className={`ml-[22px] ${line}`} />
        <button title="最終結果を表示" className="ml-[17px]"><Glyph name="showEnd" /></button>
        <span className={`ml-[22px] ${line}`} />
        <button title="固有にする" className="ml-[18px]"><Glyph name="unique" /></button>
        <button title="モディファイヤを除去" className="ml-[15px]"><Glyph name="trash" /></button>
        <span className={`ml-[22px] ${line}`} />
        <button title="モディファイヤ セットを設定" className="ml-5"><Glyph name="configure" /></button>
      </div>
      <hr className="mt-[29px] mr-[11px] ml-[9px] border-t-[3px] border-black" />

      <div className="mt-[17px] mr-[13px] ml-2 flex min-h-0 flex-1 border-t-2 border-b-2 border-t-[#a0a0a0] border-b-white">
        <div className="flex min-w-0 flex-1 flex-col gap-[9px] overflow-hidden pt-[9px]">
          <Rollout title="レンダリング" />
          <Rollout title="補間" />
          <Rollout title="選択" onToggle={toggle('select')}>
            {!closed.select && (
              <div className="pr-[9px] pb-[34px] pl-3">
                <div className="mt-[17px] flex h-12 items-center justify-center gap-[12px]">
                  <button title="頂点" className={`h-12 w-[51px] bg-[#ffff00] ${sunken}`}>
                    <svg viewBox="0 0 48 44" className="size-full" aria-hidden="true">
                      <path d="M5 18h7M8 15v6M28 18h7M31 15v6M15 30h7M18 27v6M40 30h7M43 27v6" stroke="#f00" strokeWidth="3" />
                    </svg>
                  </button>
                  <button title="セグメント">
                    <svg viewBox="0 0 36 24" className="h-6 w-9" aria-hidden="true">
                      <path d="M1 8l8 7M24 6l12 10" stroke="#f00" strokeWidth="2" strokeDasharray="2 3" />
                      <path d="M9 16L24 5" stroke="#f00" strokeWidth="4" />
                    </svg>
                  </button>
                  <button title="スプライン">
                    <svg viewBox="0 0 36 24" className="h-6 w-9" aria-hidden="true">
                      <path d="M1 8l9 8L22 5l13 11" fill="none" stroke="#f00" strokeWidth="4" />
                    </svg>
                  </button>
                </div>
                <fieldset className="mt-[15px] flex justify-between border-2 border-[#a8a8a8] pt-2 pr-[9px] pb-[6px] pl-[17px]">
                  <legend className="-ml-1 px-1 leading-[26px] [font-feature-settings:normal]">名前付き選択：</legend>
                  <PanelButton className="w-[132px]">コピー</PanelButton>
                  <PanelButton disabled className="w-[132px]">貼り付け</PanelButton>
                </fieldset>
                <div className="mt-[14px] border-2 border-[#a8a8a8] pt-[7px] pb-px pl-[19px]">
                  <Check label="ハンドルをロック" className="h-[38px]" />
                  <div className="flex h-[34px] pl-[19px]">
                    <Radio name="lock" label="同様" on className="w-[135px]" />
                    <Radio name="lock" label="すべて" />
                  </div>
                  <div className="flex h-[54px] items-center">
                    <Check label="領域選択：" className="w-[169px] [font-feature-settings:normal]" />
                    <input aria-label="領域選択" defaultValue="0.1" className={`h-[34px] w-[73px] bg-white px-1 ${sunken} border-t-black border-l-black`} />
                    <Spinner className="ml-[3px] h-[34px]" />
                  </div>
                  <Check label="セグメントの終端" className="h-[44px]" />
                  <PanelButton className="mt-[3px] ml-[57px] h-[42px] w-[158px]">選択方法...</PanelButton>
                </div>
                <fieldset className="mt-[14px] border-2 border-[#a8a8a8] pl-[38px]">
                  <legend className="-ml-[25px] px-1 leading-[26px]">表示</legend>
                  <Check label="頂点番号を表示" className="h-9" />
                  <Check label="選択のみ" disabled className="h-[50px]" />
                </fieldset>
                <p className="mt-[6px] pr-[5px] text-right leading-7">16 個の頂点を選択</p>
              </div>
            )}
          </Rollout>
          <div className="mt-[5px]">
            <Rollout title="ソフト選択" />
          </div>
          <Rollout title="ジオメトリ" onToggle={toggle('geometry')}>
            {!closed.geometry && (
              <div className="pl-[6px]">
                <fieldset className="mt-4 border-2 border-r-0 border-[#a8a8a8] pb-[5px] pl-2">
                  <legend className="px-1 leading-[26px]">新規頂点タイプ</legend>
                  <div className="flex h-10">
                    <Radio name="vertex" label="線形" on className="w-[137px]" />
                    <Radio name="vertex" label="ベジェ" />
                  </div>
                  <div className="flex h-[38px]">
                    <Radio name="vertex" label="スムーズ" className="w-[137px]" />
                    <Radio name="vertex" label="ベジェ コーナー" />
                  </div>
                </fieldset>
                <div className="mt-2 grid grid-cols-[150px_1fr] gap-y-[10px] pr-[10px] pl-[2px]">
                  <PanelButton>ラインを作成</PanelButton>
                  <PanelButton className="ml-[25px]">ブレーク</PanelButton>
                  <PanelButton>アタッチ</PanelButton>
                  <Check label="方向再設定" className="row-span-2 ml-2" />
                  <PanelButton>複数アタッチ</PanelButton>
                </div>
                <PanelButton className="mt-2 ml-[2px] w-[169px]">クロス セクション</PanelButton>
                <div className="mt-[13px] mr-[7px] ml-[2px] flex items-center border-2 border-[#a8a8a8] py-[11px] pl-[11px]">
                  <PanelButton className="mr-[31px] w-[112px]">リファイン</PanelButton>
                  <Check label="接続" />
                </div>
              </div>
            )}
          </Rollout>
        </div>
        <div className="flex w-[9px] shrink-0 flex-col bg-black">
          <div className="h-[491px] bg-[#a0a0a0] px-[2px] pt-[235px]">
            <div className="h-[17px] bg-[repeating-linear-gradient(to_bottom,#fff_0_2px,#a0a0a0_2px_4px)]" />
          </div>
        </div>
        <div className="w-[2px] bg-white" />
      </div>
    </aside>
  )
}

/* ---------- status bar ---------- */

function Coord({ axis, className }) {
  return (
    <label className="flex items-center">
      <span className={`pr-1 text-center ${className}`}>{axis}:</span>
      <input className={`h-[44px] w-[118px] bg-white px-1 ${sunken} border-t-black border-l-black`} />
    </label>
  )
}

const Rule = () => <span className="h-9 w-[2px] bg-[#a8a8a8]" />

function IconButton({ name, className = '', flyout }) {
  return (
    <button title={name} className={`relative flex h-[46px] items-center justify-center ${className}`}>
      <Glyph name={name} />
      {flyout && flyoutMark}
    </button>
  )
}

function StatusBar() {
  const navIcons = ['zoom', 'zoomAll', 'extents', 'extentsAll', 'zoomRegion', 'pan', 'orbit', 'maximize']
  return (
    <footer className="flex h-[105px] shrink-0 border-t-2 border-[#f0f0f0] bg-[#f0f0f0]">
      <div className="flex w-[209px] shrink-0 flex-col gap-[3px] pt-[2px] pl-[3px]">
        <input aria-label="マクロ レコーダ" className={`h-[46px] bg-[#dbc1c3] ${sunken}`} />
        <input aria-label="リスナー" defaultValue="MAXScript によう" className={`h-[47px] bg-white px-2 ${sunken}`} />
      </div>
      <span className="ml-2 w-[6px] border-x-2 border-l-white border-r-[#a8a8a8]" />

      <div className="ml-[5px] flex min-w-0 flex-1 flex-col gap-[9px] pt-[7px]">
        <div className="flex h-[43px] items-center">
          <p className={`flex h-full flex-1 items-center pl-[10px] ${sunken}`}>1 個のシェイプが選択されました</p>
          <div className="ml-[6px] flex">
            <button title="選択をトグル" className="flex w-14 justify-center"><Glyph name="bulb" className="size-[30px]" /></button>
            <button title="選択をロック" className="flex w-14 justify-center"><Glyph name="lock" className="size-[30px]" /></button>
            <button title="絶対モード" className="flex w-14 justify-center"><Glyph name="absolute" className="size-[30px]" /></button>
          </div>
          <Coord axis="X" className="w-[43px]" />
          <Coord axis="Y" className="w-[70px]" />
          <Coord axis="Z" className="w-[70px]" />
          <p className={`ml-[33px] flex h-full w-[208px] items-center pl-[10px] ${sunken}`}>グリッド = 10.0</p>
        </div>
        <div className="flex h-[43px] items-center">
          <p className={`flex h-full flex-1 items-center border-r-0 pl-[10px] ${sunken}`}>クリックまたはドラッグをして、オブジェクトを選択します</p>
          <button title="適応デグラデーション" className="mx-4"><Glyph name="box" className="size-[30px]" /></button>
          <p className={`flex h-full w-[208px] items-center pl-[10px] ${sunken}`}>時間タグを追加</p>
        </div>
      </div>

      <div className="ml-[10px] flex gap-[9px] pt-1">
        <button title="キーを設定" className={`flex h-[92px] w-[91px] items-center justify-center ${raised}`}>
          <Glyph name="key" className="size-[54px]" />
        </button>
        <div className="flex w-[134px] flex-col">
          <PanelButton className="h-[46px]">オート キー</PanelButton>
          <PanelButton className="h-[46px]">セット キー</PanelButton>
        </div>
        <div className="flex w-[241px] flex-col gap-[3px]">
          <Drop label="選択リスト" value="選択" className="h-[44px] w-full" />
          <div className="flex">
            <IconButton name="tangent" className="w-[55px]" flyout />
            <PanelButton className="h-[45px] flex-1">キー フィルタ...</PanelButton>
          </div>
        </div>
      </div>

      <div className="ml-[14px] flex w-[267px] shrink-0 flex-col gap-[2px] pt-1">
        <div className="flex items-center">
          <IconButton name="first" className="w-[53px]" />
          <Rule />
          <IconButton name="prev" className="w-[50px]" />
          <IconButton name="play" className="w-[50px]" flyout />
          <IconButton name="next" className="w-[46px]" />
          <Rule />
          <IconButton name="last" className="w-[54px]" />
        </div>
        <div className="flex items-center">
          <IconButton name="keyMode" className="w-[53px]" />
          <Rule />
          <input aria-label="現在のフレーム" defaultValue="0" className={`ml-1 h-[44px] w-[131px] bg-white px-1 ${sunken} border-t-black border-l-black`} />
          <Spinner className="mx-[3px] h-[36px]" />
          <IconButton name="timeConfig" className="w-[50px]" />
        </div>
      </div>
      <div className="grid w-[200px] shrink-0 grid-cols-4 grid-rows-[46px_46px] gap-y-[2px] border-l-2 border-[#a8a8a8] pt-1">
        {navIcons.map((name) => (
          <IconButton key={name} name={name} flyout={/extents|pan|orbit/.test(name)} className={name === 'extents' ? raised : ''} />
        ))}
      </div>
    </footer>
  )
}

function SideBar() {
  return (
    <div className="flex w-[84px] shrink-0 flex-col">
      <div className="h-[21px] px-[7px] pt-2">
        <hr className="border-t-2 border-[#a8a8a8]" />
      </div>
      <div className="flex flex-1 flex-col justify-end bg-linear-to-r from-[#8e8e8e] via-[#838383] to-[#606060] pb-[5px] pl-[7px]">
        <button aria-label="ビューポート レイアウト タブ" className="mb-[22px] ml-[13px] flex h-[43px] w-[42px] items-center justify-center rounded-[5px] border-2 border-[#5a5a5a] bg-[#c4c4c4]">
          <svg viewBox="0 0 10 18" className="h-[18px] w-[10px]"><path d="M0 0l10 9-10 9z" /></svg>
        </button>
        <button aria-label="レイアウト 1" className="h-[92px] rounded-l-[6px] border-2 border-r-0 border-[#4f5f68] bg-linear-to-b from-[#b9c1c6] to-[#a4d4ee] pt-[14px] pr-1 pb-[17px] pl-1">
          <span className="block size-full rounded-[3px] border-2 border-[#6a6f73] bg-linear-to-b from-[#a3a7a9] to-[#8e9496]" />
        </button>
      </div>
    </div>
  )
}

export default function App() {
  return (
    <div className="flex h-screen flex-col bg-white px-7 pt-[389px] pb-[390px] font-['DejaVu_Sans_Condensed','DejaVu_Sans','Noto_Sans_CJK_JP',sans-serif] text-[22px] leading-7 text-black [font-feature-settings:'palt']">
      <div className="flex min-h-0 flex-1 flex-col bg-[#f0f0f0]">
        <MenuBar />
        <Toolbar />
        <div className="flex min-h-0 flex-1">
          <SideBar />
          <div className="flex min-w-0 flex-1 flex-col">
            <Viewport />
            <TimeSlider />
            <TrackBar />
          </div>
          <CommandPanel />
        </div>
        <StatusBar />
      </div>
    </div>
  )
}
